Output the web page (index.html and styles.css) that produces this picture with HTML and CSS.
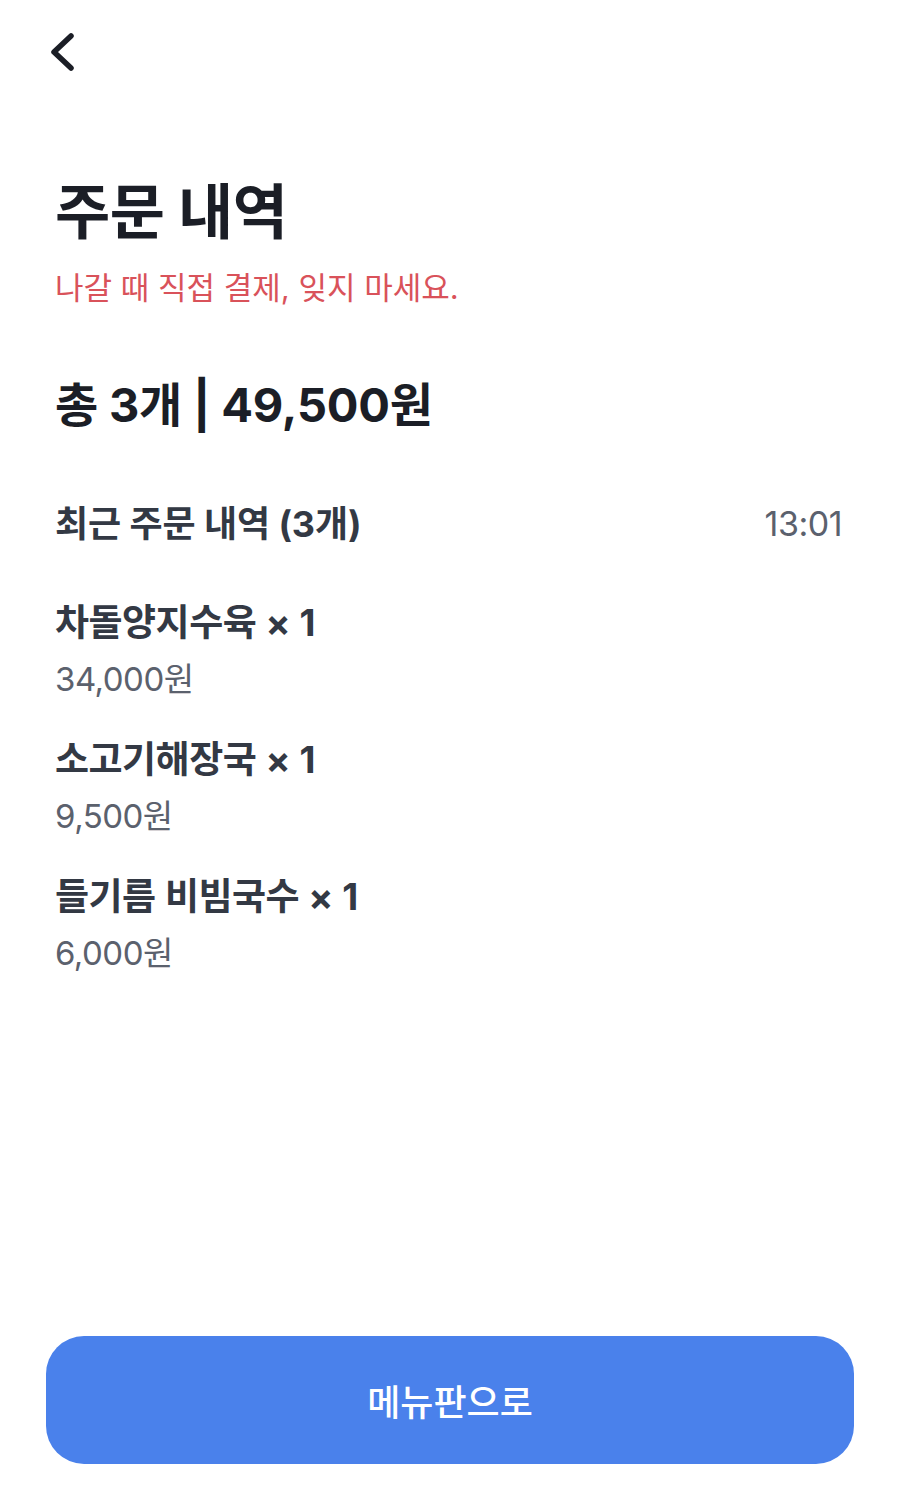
FILE: index.html
```html
<!DOCTYPE html>
<html lang="ko">
<head>
<meta charset="utf-8">
<link rel="stylesheet" href="styles.css">
</head>
<body>
<div class="page">
  <header class="topbar">
    <button class="back" aria-label="뒤로">
      <svg width="30" height="44" viewBox="0 0 30 44"><polyline points="24,5 7,21 24,37" fill="none" stroke="#1b1e26" stroke-width="5.5" stroke-linecap="round" stroke-linejoin="round"/></svg>
    </button>
  </header>
  <main class="content">
    <h1 class="title">주문 내역</h1>
    <p class="notice">나갈 때 직접 결제, 잊지 마세요.</p>
    <p class="total">총 3개 | 49,500원</p>
    <div class="recent">
      <span class="recent-label">최근 주문 내역 (3개)</span>
      <span class="recent-time">13:01</span>
    </div>
    <ul class="items">
      <li class="item"><span class="item-name">차돌양지수육 × 1</span><span class="item-price">34,000원</span></li>
      <li class="item"><span class="item-name">소고기해장국 × 1</span><span class="item-price">9,500원</span></li>
      <li class="item"><span class="item-name">들기름 비빔국수 × 1</span><span class="item-price">6,000원</span></li>
    </ul>
  </main>
  <footer class="footer">
    <button class="menu-btn">메뉴판으로</button>
  </footer>
</div>
</body>
</html>
```
FILE: styles.css
```css
* { box-sizing: border-box; }
html, body { margin: 0; padding: 0; background: #fff; }
body {
  font-family: Inter, "Noto Sans CJK KR", sans-serif;
  color: #1b1e26;
}
.page {
  min-height: 1492px;
  display: flex;
  flex-direction: column;
}
.topbar {
  height: 110px;
  padding: 31px 0 0 47px;
}
.back {
  border: 0;
  background: none;
  padding: 0;
  display: block;
}
.content {
  padding: 0 58px 0 55px;
  flex: 1;
}
.title {
  margin: 62px 0 0;
  font-size: 60px;
  font-weight: 700;
  line-height: 80px;
  letter-spacing: -0.5px;
}
.notice {
  margin: 16px 0 0;
  font-size: 31px;
  line-height: 40px;
  color: #d9525a;
  letter-spacing: 0;
}
.total {
  margin: 67px 0 0;
  font-size: 47px;
  font-weight: 700;
  line-height: 60px;
  letter-spacing: -0.2px;
}
.recent {
  margin-top: 67px;
  display: flex;
  justify-content: space-between;
  align-items: center;
  line-height: 44px;
}
.recent-label {
  font-size: 36px;
  font-weight: 700;
  color: #333944;
  letter-spacing: -0.1px;
}
.recent-time {
  font-size: 34px;
  color: #5b616d;
  letter-spacing: -0.5px;
}
.items {
  list-style: none;
  margin: 49px 0 0;
  padding: 0;
  display: flex;
  flex-direction: column;
  gap: 25px;
}
.item {
  display: flex;
  flex-direction: column;
}
.item-name {
  font-size: 37px;
  font-weight: 700;
  color: #333944;
  line-height: 56px;
  letter-spacing: -0.5px;
  word-spacing: 1px;
}
.item-price {
  font-size: 33px;
  color: #5b616d;
  line-height: 56px;
  letter-spacing: -0.5px;
}
.footer {
  padding: 0 46px 28px;
}
.menu-btn {
  width: 100%;
  height: 128px;
  border: 0;
  border-radius: 38px;
  background: #4a81eb;
  color: #fff;
  font-family: Inter, "Noto Sans CJK KR", sans-serif;
  font-size: 36px;
  font-weight: 500;
}
```
